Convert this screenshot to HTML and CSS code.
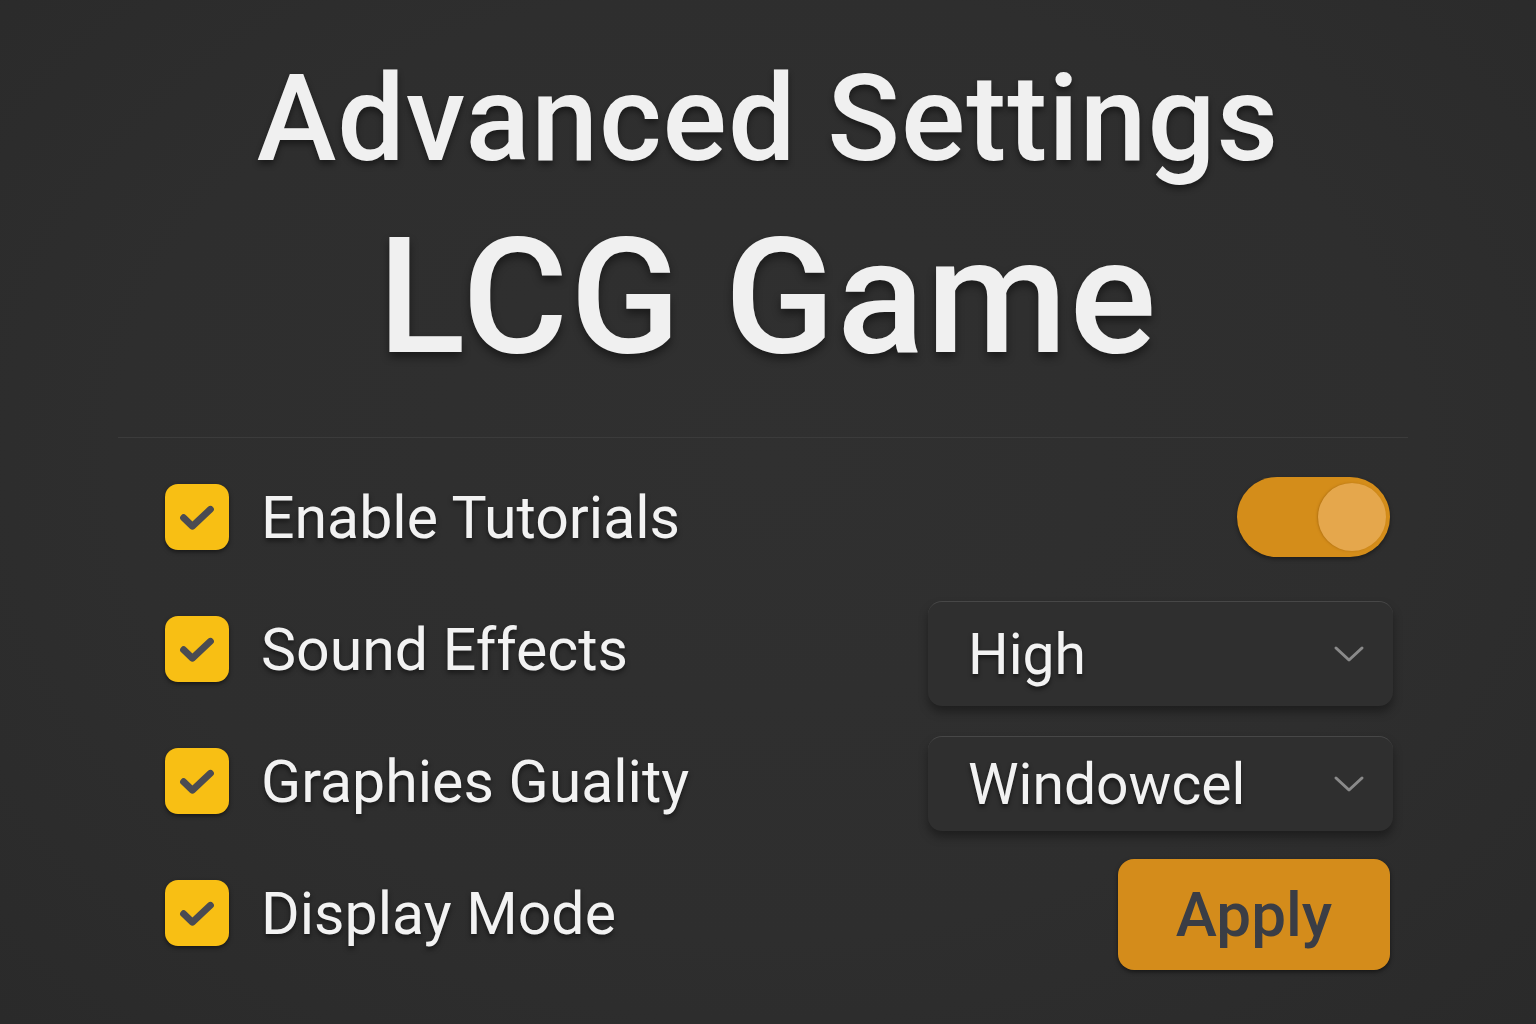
FILE: index.html
```html
<!DOCTYPE html>
<html lang="en">
<head>
    <meta charset="UTF-8">
    <meta name="viewport" content="width=device-width, initial-scale=1.0">
    <title>Advanced Settings - LCG Game</title>
    <link rel="stylesheet" href="styles.css">
</head>
<body>

<header class="header">
    <h1 class="title">Advanced Settings</h1>
    <h2 class="game-name">LCG Game</h2>
</header>

<hr class="divider">

<div class="settings">
    <div class="row">
        <label class="option">
            <span class="check">
                <svg viewBox="0 0 24 24" width="46" height="46"><path d="M5 12.4l4.6 4.4L19 8" fill="none" stroke="#4a4b52" stroke-width="3.6" stroke-linecap="round" stroke-linejoin="round"/></svg>
            </span>
            <span class="label">Enable Tutorials</span>
        </label>
        <div class="toggle"><span class="knob"></span></div>
    </div>
    <div class="row">
        <label class="option">
            <span class="check">
                <svg viewBox="0 0 24 24" width="46" height="46"><path d="M5 12.4l4.6 4.4L19 8" fill="none" stroke="#4a4b52" stroke-width="3.6" stroke-linecap="round" stroke-linejoin="round"/></svg>
            </span>
            <span class="label">Sound Effects</span>
        </label>
        <div class="select select-high">
            <span class="value">High</span>
            <svg class="chevron" viewBox="0 0 32 20" width="32" height="20"><path d="M3 4l13 12L29 4" fill="none" stroke="#8a8a8a" stroke-width="3" stroke-linecap="round" stroke-linejoin="round"/></svg>
        </div>
    </div>
    <div class="row">
        <label class="option">
            <span class="check">
                <svg viewBox="0 0 24 24" width="46" height="46"><path d="M5 12.4l4.6 4.4L19 8" fill="none" stroke="#4a4b52" stroke-width="3.6" stroke-linecap="round" stroke-linejoin="round"/></svg>
            </span>
            <span class="label">Graphies Guality</span>
        </label>
        <div class="select select-mode">
            <span class="value">Windowcel</span>
            <svg class="chevron" viewBox="0 0 32 20" width="32" height="20"><path d="M3 4l13 12L29 4" fill="none" stroke="#8a8a8a" stroke-width="3" stroke-linecap="round" stroke-linejoin="round"/></svg>
        </div>
    </div>
    <div class="row">
        <label class="option">
            <span class="check">
                <svg viewBox="0 0 24 24" width="46" height="46"><path d="M5 12.4l4.6 4.4L19 8" fill="none" stroke="#4a4b52" stroke-width="3.6" stroke-linecap="round" stroke-linejoin="round"/></svg>
            </span>
            <span class="label">Display Mode</span>
        </label>
        <button class="apply" type="button">Apply</button>
    </div>
</div>

</body>
</html>
```

FILE: styles.css
```css
html, body {
    margin: 0;
    padding: 0;
}
body {
    height: 1024px;
    overflow: hidden;
    background: radial-gradient(ellipse at 50% 45%, #303030 0%, #2e2e2e 60%, #2a2a2a 100%);
    font-family: Roboto, "Liberation Sans", sans-serif;
    color: #f2f2f2;
}

/* en-tete */
.header {
    text-align: center;
    padding-top: 51px;
}
.title {
    margin: 0;
    font-size: 120px;
    font-weight: 500;
    line-height: 136px;
    letter-spacing: 1px;
    color: #f0f0f0;
    text-shadow: 0 4px 6px rgba(0, 0, 0, 0.45);
}
.game-name {
    margin: 24px 0 0 0;
    font-size: 162px;
    font-weight: 500;
    line-height: 172px;
    letter-spacing: 2px;
    color: #f0f0f0;
    text-shadow: 0 5px 8px rgba(0, 0, 0, 0.45);
}

.divider {
    margin: 54px 128px 0 118px;
    border: 0;
    height: 1px;
    background: #3b3b3b;
}

/* liste des options */
.settings {
    padding: 13px 143px 0 165px;
}
.row {
    display: flex;
    align-items: center;
    justify-content: space-between;
    height: 132px;
}
.option {
    display: flex;
    align-items: center;
    gap: 32px;
}
.check {
    width: 64px;
    height: 66px;
    border-radius: 13px;
    background: #f8bf14;
    box-shadow: 0 2px 4px rgba(0, 0, 0, 0.5);
    display: flex;
    align-items: center;
    justify-content: center;
}
.label {
    font-size: 59px;
    font-weight: 400;
    color: #f2f2f2;
    text-shadow: 0 3px 5px rgba(0, 0, 0, 0.5);
}

/* interrupteur */
.toggle {
    width: 153px;
    height: 80px;
    margin-right: 3px;
    border-radius: 40px;
    background: #d48d1a;
    box-shadow: 0 2px 4px rgba(0, 0, 0, 0.4);
    display: flex;
    align-items: center;
    justify-content: flex-end;
    padding-right: 4px;
    box-sizing: border-box;
}
.knob {
    width: 68px;
    height: 68px;
    border-radius: 50%;
    background: #e5a74c;
    box-shadow: -1px 0 2px rgba(150, 90, 10, 0.5);
}

/* listes deroulantes */
.select {
    width: 465px;
    box-sizing: border-box;
    display: flex;
    align-items: center;
    justify-content: space-between;
    padding: 0 28px 0 40px;
    border-radius: 14px;
    background: #2f2f2f;
    border-top: 1px solid #474747;
    box-shadow: 0 6px 10px rgba(0, 0, 0, 0.35);
}
.select-high {
    height: 105px;
    margin-top: 9px;
}
.select-mode {
    height: 95px;
    margin-top: 5px;
}
.value {
    font-size: 57px;
    color: #f2f2f2;
    text-shadow: 0 3px 4px rgba(0, 0, 0, 0.5);
}

/* bouton */
.apply {
    width: 272px;
    height: 111px;
    margin-right: 3px;
    margin-top: 3px;
    border: 0;
    border-radius: 16px;
    background: #d48c1b;
    box-shadow: 0 2px 4px rgba(0, 0, 0, 0.5);
    font-family: Roboto, "Liberation Sans", sans-serif;
    font-size: 62px;
    font-weight: 500;
    color: #3a3d45;
    cursor: pointer;
}
```
